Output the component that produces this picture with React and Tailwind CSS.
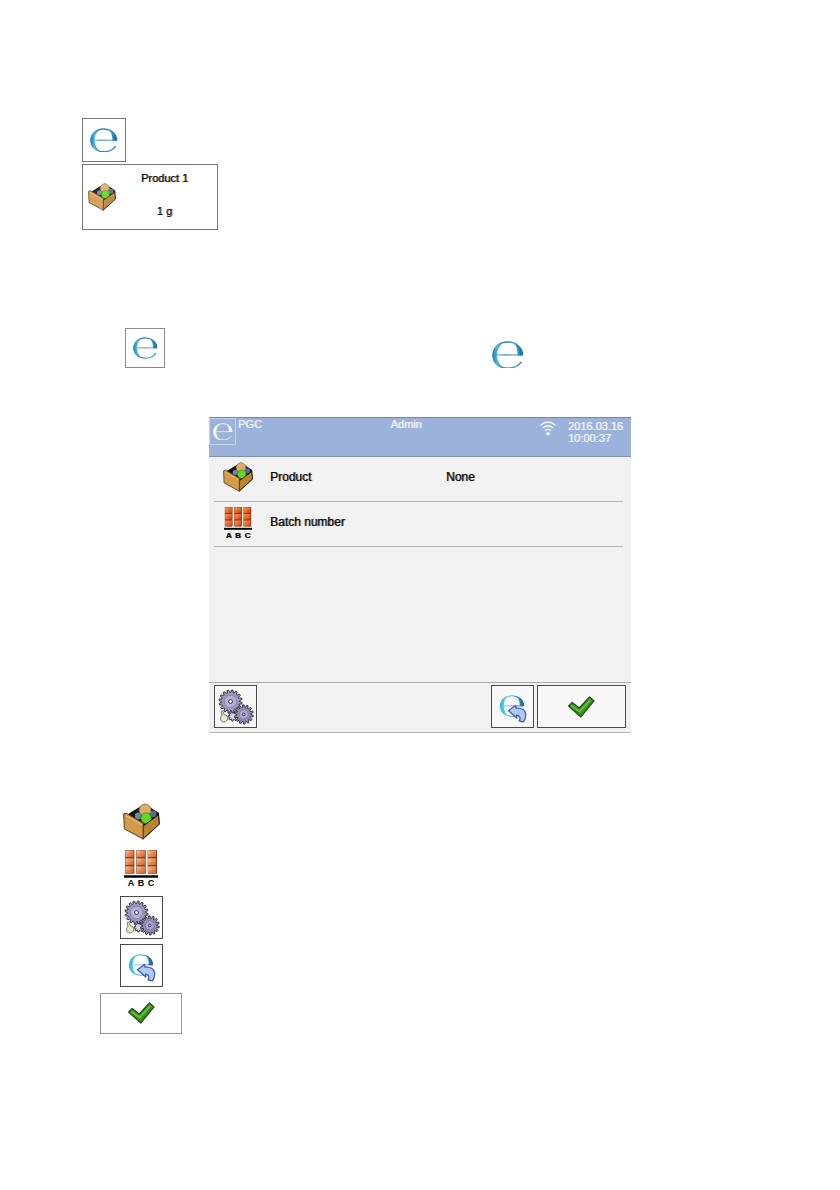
import clsx from "clsx";

const gearPath = (cx, cy, outer, inner, teeth) => {
    const points = [];
    for (let i = 0; i < teeth; i++) {
        const step = (Math.PI * 2) / teeth;
        const start = i * step;
        [[0, inner], [0.22, outer], [0.56, outer], [0.78, inner]].forEach(([t, r]) => {
            const a = start + t * step;
            points.push(`${(cx + r * Math.cos(a)).toFixed(1)} ${(cy + r * Math.sin(a)).toFixed(1)}`);
        });
    }
    return `M${points.join("L")}Z`;
};

// ring, crossbar and the two thick crescents of the estimated sign
const MarkShape = ({ paint }) => (
    <g>
        <path d="M82 37C80 16 64 3 42 3S3 17 3 38s17 35 39 35c16 0 29-6 37-17" fill="none" stroke={paint} strokeWidth="4" />
        <path d="M32 3C12 7 2 21 2 38s10 31 30 35C20 65 14 53 14 38S20 11 32 3Z" fill={paint} />
        <path d="M58 5c16 6 25 17 25 34H69C69 24 66 13 58 5Z" fill={paint} />
        <path d="M13 36h68v3H13Z" fill={paint} />
    </g>
);

const EMark = ({ id, className, plain }) => (
    <svg viewBox="0 0 86 76" className={className} aria-hidden="true">
        <defs>
            <linearGradient id={id} x1="0" y1="0" x2="86" y2="0" gradientUnits="userSpaceOnUse">
                <stop offset="0" stopColor="#1674b5" />
                <stop offset="0.15" stopColor="#4db4de" />
                <stop offset="0.4" stopColor="#3a7b9c" />
                <stop offset="0.75" stopColor="#3f9fce" />
                <stop offset="1" stopColor="#0d5fa8" />
            </linearGradient>
        </defs>
        <MarkShape paint={plain ? "#f4f8ff" : `url(#${id})`} />
    </svg>
);

const DrawerIcon = ({ className }) => (
    <svg viewBox="0 0 112 112" className={className} aria-hidden="true">
        <path d="M14 34 66 2l43 28 2 34-51 47-8-40Z" fill="#151515" />
        <circle cx="46" cy="39" r="10" fill="#6d87a0" />
        <circle cx="91" cy="33" r="10" fill="#4f6f92" />
        <circle cx="67" cy="21" r="18" fill="#d9ae6c" stroke="#8c6428" strokeWidth="2" />
        <circle cx="70" cy="46" r="16" fill="#63d81c" stroke="#2a7a10" strokeWidth="2" />
        <path d="M61 70l46-34 3 28-50 45Z" fill="#b98338" stroke="#241505" strokeWidth="3" />
        <path d="M2 33l8-2 51 30v48L4 78Z" fill="#d19a4c" stroke="#5a3a12" strokeWidth="3" strokeLinejoin="round" />
        <path d="M9 38l48 28" stroke="#edc27e" strokeWidth="3" />
    </svg>
);

const BatchIcon = ({ large }) => (
    <div className={clsx("text-black", large ? "w-[34px]" : "w-7 pt-1")}>
        <svg viewBox="0 0 102 84" className="block w-full" aria-hidden="true">
            <defs>
                <linearGradient id={large ? "tile-large" : "tile"} x1="0" y1="0" x2="1" y2="1">
                    <stop offset="0" stopColor={large ? "#fbc9a4" : "#ff9a5e"} />
                    <stop offset="0.5" stopColor={large ? "#e58a55" : "#ee6a2c"} />
                    <stop offset="1" stopColor={large ? "#c25f2c" : "#b53d10"} />
                </linearGradient>
            </defs>
            {[3, 37, 71].map((x) => (
                <g key={x}>
                    <path d={`M${x} 0h28v71h-28Z`} fill="#6b2a10" />
                    {[1, 25, 49].map((y) => (
                        <rect
                            key={y}
                            x={x + 1}
                            y={y}
                            width="25"
                            height="21"
                            fill={large ? "url(#tile-large)" : "url(#tile)"}
                        />
                    ))}
                </g>
            ))}
            <path d="M0 76h102v7H0Z" fill="#000" />
        </svg>
        <div className={clsx("flex justify-around font-bold", large ? "px-0.5 text-[9px] leading-[10px]" : "text-[8px] leading-[10px]")}>
            <span>A</span>
            <span>B</span>
            <span>C</span>
        </div>
    </div>
);

const GearsIcon = () => (
    <svg viewBox="3 3 124 124" className="size-full" aria-hidden="true">
        <g stroke="#34313f" strokeWidth="3">
            <path d={gearPath(57, 94, 15, 10, 9)} fill="#d8d8e4" />
            <path d={gearPath(50, 50, 35, 27, 16)} fill="#9c9abf" />
            <path d={gearPath(90, 89, 29, 21, 14)} fill="#918fb6" />
        </g>
        <circle cx="50" cy="50" r="19" fill="#b3b1d4" stroke="#8583ab" strokeWidth="3" />
        <circle cx="50" cy="50" r="6" fill="#f2f2f8" stroke="#3b3857" strokeWidth="3" />
        <circle cx="90" cy="89" r="14" fill="#a9a7cd" stroke="#7b79a6" strokeWidth="3" />
        <circle cx="90" cy="89" r="4" fill="#f2f2f8" stroke="#3b3857" strokeWidth="3" />
        <path d="M22 80c4-3 8 0 7 5l2 5c8 1 12 7 10 14-2 8-16 11-20 3-3-5-1-11 3-14Z" fill="#e9e8c8" stroke="#77755a" strokeWidth="3" />
    </svg>
);

const BackIcon = ({ id }) => (
    <svg viewBox="0 0 129 129" className="size-full" aria-hidden="true">
        <defs>
            <linearGradient id={id} x1="0" y1="0" x2="86" y2="0" gradientUnits="userSpaceOnUse">
                <stop offset="0" stopColor="#39b6dd" />
                <stop offset="0.3" stopColor="#63d3e6" />
                <stop offset="1" stopColor="#155f9b" />
            </linearGradient>
        </defs>
        <g transform="translate(24 28) scale(0.92)">
            <MarkShape paint={`url(#${id})`} />
        </g>
        <path
            d="M52 78l22-17 2 9c16-3 31 6 30 22 0 8-3 15-7 21l-14-3c6-8 3-18-8-18l1 9Z"
            fill="#b3c9f7"
            stroke="#4161ad"
            strokeWidth="4"
            strokeLinejoin="round"
        />
    </svg>
);

const CheckIcon = () => (
    <svg viewBox="0 0 84 68" className="h-[22px] w-[27px]" aria-hidden="true">
        <path d="M2 31l11-11 22 17L67 3l14 12-41 50Z" fill="#36941f" stroke="#244d1b" strokeWidth="4" strokeLinejoin="round" />
        <path d="M10 30l26 18L70 11" fill="none" stroke="#67c63c" strokeWidth="5" />
    </svg>
);

const WifiIcon = () => (
    <svg viewBox="0 0 48 45" className="h-[15px] w-4" fill="none" stroke="#f4f8ff" strokeWidth="4" aria-hidden="true">
        <path d="M2 13C14 0 34 0 46 13M9 21c9-9 21-9 30 0M16 29c5-5 11-5 16 0" />
        <circle cx="24" cy="38" r="5" fill="#f4f8ff" stroke="none" />
    </svg>
);

const IconButton = ({ label, className, children }) => (
    <button
        type="button"
        aria-label={label}
        className={clsx("flex shrink-0 items-center justify-center border", className)}
    >
        {children}
    </button>
);

const settings = [
    { name: "Product", value: "None", icon: <DrawerIcon className="size-[30px]" /> },
    { name: "Batch number", value: "", icon: <BatchIcon /> },
];

const Terminal = () => (
    <section className="mx-auto mt-[49px] w-full max-w-[422px] border-b border-[#b5b5b5] bg-[#f2f2f2]">
        <header className="flex h-10 items-start border-y border-t-[#7186b5] border-b-[#7e90b8] bg-[#9db2db] text-[11px] leading-3 text-[#f4f8ff] text-shadow-[1px_0_#f4f8ff80]">
            <div className="flex w-[43%] gap-0.5">
                <div className="flex size-[27px] items-center justify-center border border-[#c5d2ee]">
                    <EMark id="mark-header" plain className="w-5" />
                </div>
                <span>PGC</span>
            </div>
            <span>Admin</span>
            <div className="flex flex-1 items-start justify-end gap-3 pr-2">
                <div className="pt-[3px]">
                    <WifiIcon />
                </div>
                <time className="pt-0.5">
                    2016.03.16
                    <br />
                    10:00:37
                </time>
            </div>
        </header>
        <div className="h-[225px]">
            {settings.map((item) => (
                <button
                    key={item.name}
                    type="button"
                    className="mr-2 ml-[5px] flex h-[45px] w-[calc(100%-13px)] items-center border-b border-[#b4b4b4] pb-1 text-left text-[12px] leading-4 text-black text-shadow-[1px_0_#0008]"
                >
                    <span className="flex w-14 justify-center pr-2">{item.icon}</span>
                    <span className="flex-1">{item.name}</span>
                    <span className="w-[177px]">{item.value}</span>
                </button>
            ))}
        </div>
        <footer className="flex items-center gap-[3px] border-t border-[#a8a8a8] px-[5px] pt-0.5 pb-1">
            <IconButton label="Settings" className="size-[43px] border-[#4a4a4a] bg-[#f8f8f8]">
                <GearsIcon />
            </IconButton>
            <div className="flex-1" />
            <IconButton label="Exit e-control" className="size-[43px] border-[#4a4a4a] bg-[#f8f8f8]">
                <BackIcon id="back-footer" />
            </IconButton>
            <IconButton label="Confirm" className="h-[43px] w-[89px] border-[#4a4a4a] bg-[#f8f8f8]">
                <CheckIcon />
            </IconButton>
        </footer>
    </section>
);

const App = () => {
    return (
        <main className="min-h-screen bg-white pt-[118px] pb-16 font-['Liberation_Sans',Arial,sans-serif]">
            <div className="flex flex-col items-start gap-0.5 pl-[82px]">
                <IconButton label="Packaged goods control" className="size-11 border-[#777777] bg-white">
                    <EMark id="mark-large" className="w-7" />
                </IconButton>
                <button
                    type="button"
                    className="flex h-[66px] w-[136px] items-center border border-[#777777] bg-white pl-[5px] text-[11px] leading-4 text-black text-shadow-[1px_0_#0008]"
                >
                    <DrawerIcon className="w-7 opacity-90" />
                    <span className="flex h-full flex-1 flex-col justify-between pt-[5px] pr-1 pb-2.5 text-center">
                        <span>Product 1</span>
                        <span>1 g</span>
                    </span>
                </button>
            </div>

            <div className="mt-[98px] flex items-end gap-[327px] pl-[125px]">
                <IconButton label="Packaged goods control" className="size-10 border-[#8a8a8a] bg-white">
                    <EMark id="mark-small" className="w-[25px]" />
                </IconButton>
                <div className="h-[27px] w-8 shrink-0 overflow-hidden">
                    <EMark id="mark-inline" className="w-8" />
                </div>
            </div>

            <Terminal />

            <ul className="mt-16 flex flex-col pl-[100px]">
                <li className="flex h-12 w-[82px] items-center justify-center">
                    <DrawerIcon className="size-[37px]" />
                </li>
                <li className="flex h-12 w-[82px] items-center justify-center">
                    <BatchIcon large />
                </li>
                <li className="flex h-12 w-[82px] items-center justify-center">
                    <IconButton label="Settings" className="size-[43px] border-[#4a4a4a] bg-white">
                        <GearsIcon />
                    </IconButton>
                </li>
                <li className="flex h-12 w-[82px] items-center justify-center">
                    <IconButton label="Exit e-control" className="size-[43px] border-[#4a4a4a] bg-white">
                        <BackIcon id="back-list" />
                    </IconButton>
                </li>
                <li className="flex h-12 w-[82px] items-center justify-center">
                    <IconButton label="Confirm" className="h-[41px] w-full border-[#999999] bg-white">
                        <CheckIcon />
                    </IconButton>
                </li>
            </ul>
        </main>
    );
};

export default App;
